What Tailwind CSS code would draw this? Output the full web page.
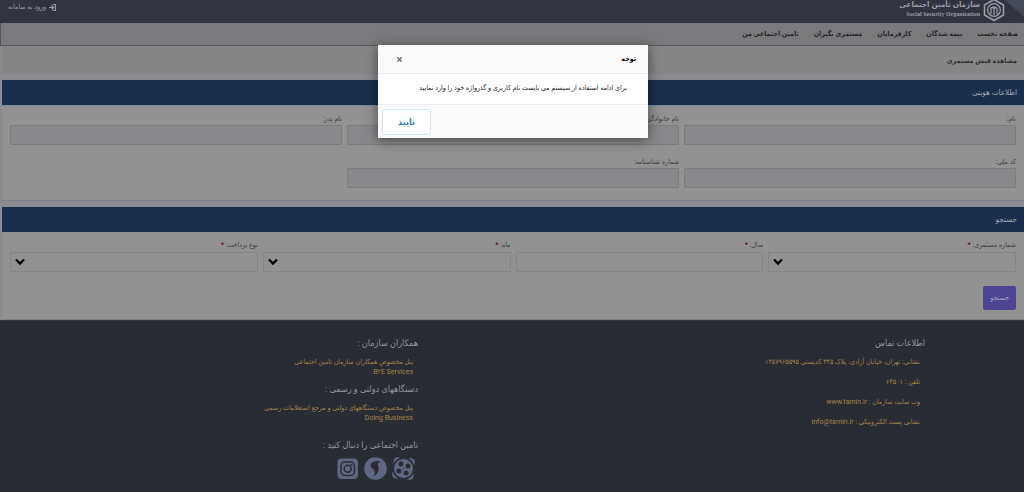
<!DOCTYPE html>
<html lang="fa" dir="rtl">
<head>
<meta charset="utf-8">
<meta name="viewport" content="width=device-width, initial-scale=1">
<title>مشاهده فیش مستمری</title>
<script src="https://cdn.jsdelivr.net/npm/@tailwindcss/browser@4"></script>
</head>
<body class="min-h-screen flex flex-col bg-[#8b8b92] font-['Roboto','DejaVu_Sans_Condensed','DejaVu_Sans',sans-serif] text-[7px] leading-[10px] text-[#3f3f42]">
<header class="h-[23px] shrink-0 overflow-hidden bg-[#31343f] flex justify-between items-start pl-2">
  <a href="#" class="flex items-start gap-[3px] text-[#9a9ca1]" aria-label="سازمان تأمین اجتماعی">
    <svg class="w-[19px] h-[23px]" viewBox="0 0 19 23" aria-hidden="true"><path d="M0 0h19v17Z" fill="#454955"/></svg>
    <svg class="w-[22px] h-[24px] -mt-[2px] -mr-[3px]" viewBox="0 0 22 24" fill="none" stroke="currentColor" stroke-width="1.600"><path d="M11 1.500 20.500 7v10L11 22.500 1.500 17V7Z"/><circle cx="11" cy="12" r="6.300" stroke-width="1.300"/><path d="M8 16v-5M11 17V8M14 16v-5M8 11a1.500 1.500 0 0 1 3 0a1.500 1.500 0 0 1 3 0" stroke-width="1.300"/></svg>
    <span class="flex flex-col items-start">
      <span class="text-[8px] leading-[10px] font-bold">سازمان تأمین اجتماعی</span>
      <span dir="ltr" class="font-['Liberation_Serif',serif] font-bold text-[6px] leading-[8px]">Social Security Organization</span>
    </span>
  </a>
  <a href="#" class="flex items-center gap-[3px] pt-[2px] text-[#9a9ca1]">
    <svg class="size-[7px]" viewBox="0 0 14 14" fill="none" stroke="currentColor" stroke-width="2.400"><path d="M8 1h5v12H8M0 7h9M5 2.500 9.500 7 5 11.500"/></svg>
    <span>ورود به سامانه</span>
  </a>
</header>
<nav class="h-[23px] shrink-0 bg-[#7a7a7c] border-b border-l border-[#56575c] flex items-center gap-[15px] px-[6px] font-bold text-[#28282c]">
  <a href="#">صفحه نخست</a><a href="#">بیمه شدگان</a><a href="#">کارفرمایان</a><a href="#">مستمری بگیران</a><a href="#">تامین اجتماعی من</a>
</nav>
<h1 class="h-7 shrink-0 ml-[2px] bg-[#868686] flex items-center px-[7px] pt-[2px] font-bold text-[#303033]">مشاهده فیش مستمری</h1>

<main class="flex flex-col gap-[6px] pt-[6px] ml-[2px]">
  <section class="bg-[#929292] border-b border-[#838387]">
    <h2 class="h-[25px] bg-[#192f4d] flex items-center px-[7px] text-[8px] text-[#a3aab3]">اطلاعات هویتی</h2>
    <div class="grid grid-cols-3 gap-x-[5px] gap-y-3 px-2 pt-2 pb-3 border-t border-[#7e8d9b]">
      <label class="flex flex-col gap-px"><span>نام:</span><input disabled class="h-5 w-full bg-[#89898b] border border-[#7d7d81] rounded-[1px]"></label>
      <label class="flex flex-col gap-px"><span>نام خانوادگی:</span><input disabled class="h-5 w-full bg-[#89898b] border border-[#7d7d81] rounded-[1px]"></label>
      <label class="flex flex-col gap-px"><span>نام پدر:</span><input disabled class="h-5 w-full bg-[#89898b] border border-[#7d7d81] rounded-[1px]"></label>
      <label class="flex flex-col gap-px"><span>کد ملی:</span><input disabled class="h-5 w-full bg-[#89898b] border border-[#7d7d81] rounded-[1px]"></label>
      <label class="flex flex-col gap-px"><span>شماره شناسنامه:</span><input disabled class="h-5 w-full bg-[#89898b] border border-[#7d7d81] rounded-[1px]"></label>
    </div>
  </section>
  <section class="bg-[#929292] border-b border-[#838387]">
    <h2 class="h-[25px] bg-[#192f4d] flex items-center px-[7px] text-[8px] text-[#a3aab3]">جستجو</h2>
    <form class="px-2 pt-2 pb-[9px]">
      <div class="grid grid-cols-4 gap-x-[5px]">
        <label class="flex flex-col gap-[2px]"><span>شماره مستمری: <b class="text-[#5c1515]">*</b></span>
          <span class="relative block"><select class="appearance-none block h-5 w-full bg-[#929292] border border-[#85858a] rounded-[1px]"></select><svg class="absolute left-[5px] top-[6px] w-[10px] h-2 pointer-events-none" viewBox="0 0 10 8" fill="none" stroke="#08080a" stroke-width="2.400"><path d="m1 1.500 4 4 4-4"/></svg></span></label>
        <label class="flex flex-col gap-[2px]"><span>سال: <b class="text-[#5c1515]">*</b></span><input class="h-5 w-full bg-[#929292] border border-[#85858a] rounded-[1px]"></label>
        <label class="flex flex-col gap-[2px]"><span>ماه: <b class="text-[#5c1515]">*</b></span>
          <span class="relative block"><select class="appearance-none block h-5 w-full bg-[#929292] border border-[#85858a] rounded-[1px]"></select><svg class="absolute left-[5px] top-[6px] w-[10px] h-2 pointer-events-none" viewBox="0 0 10 8" fill="none" stroke="#08080a" stroke-width="2.400"><path d="m1 1.500 4 4 4-4"/></svg></span></label>
        <label class="flex flex-col gap-[2px]"><span>نوع پرداخت: <b class="text-[#5c1515]">*</b></span>
          <span class="relative block"><select class="appearance-none block h-5 w-full bg-[#929292] border border-[#85858a] rounded-[1px]"></select><svg class="absolute left-[5px] top-[6px] w-[10px] h-2 pointer-events-none" viewBox="0 0 10 8" fill="none" stroke="#08080a" stroke-width="2.400"><path d="m1 1.500 4 4 4-4"/></svg></span></label>
      </div>
      <button type="button" class="mt-[14px] h-6 px-[7px] rounded-[2px] bg-[#4d4593] text-[#aaa6cb] block">جستجو</button>
    </form>
  </section>
</main>

<footer class="grow bg-[#2a2c34] border-t border-[#343640] grid grid-cols-[507fr_517fr] text-[#a0834b]">
  <section class="pt-4 pr-[99px]">
    <h3 class="text-[9px] leading-3 text-[#92949a]">اطلاعات تماس</h3>
    <ul class="mt-2 pr-[5px] flex flex-col gap-[10px]">
      <li>نشانی: تهران، خیابان آزادی، پلاک ۳۴۵ کدپستی ۱۴۵۷۹۶۵۵۹۵</li>
      <li>تلفن : ۶۴۵۰۱</li>
      <li>وب سایت سازمان : <a href="#" dir="ltr">www.tamin.ir</a></li>
      <li>نشانی پست الکترونیکی : <a href="#" dir="ltr">info@tamin.ir</a></li>
    </ul>
  </section>
  <section class="pt-4 pr-[99px]">
    <h3 class="text-[9px] leading-3 text-[#92949a]">همکاران سازمان :</h3>
    <div class="mt-2 pr-[5px] flex flex-col items-start"><a href="#">پنل مخصوص همکاران سازمان تامین اجتماعی</a><a href="#" dir="ltr">B۲E Services</a></div>
    <h3 class="mt-[6px] text-[9px] leading-3 text-[#92949a]">دستگاههای دولتی و رسمی :</h3>
    <div class="mt-2 pr-[5px] flex flex-col items-start"><a href="#">پنل مخصوص دستگاههای دولتی و مرجع استعلامات رسمی</a><a href="#">Doing Business</a></div>
    <h3 class="mt-4 text-[9px] leading-3 text-[#92949a]">تامین اجتماعی را دنبال کنید :</h3>
    <div class="mt-[6px] mr-[3px] flex gap-[5px] text-[#606783]">
      <a href="#" aria-label="آپارات"><svg class="size-[23px]" viewBox="0 0 23 23"><g fill="currentColor"><path d="M8.500.8 5.500.2Q2.500 0 1.700 3L.9 7Q3.500 2.500 8.500.8ZM22.200 8.500l.7-3q.3-3-2.900-3.900L16 .8q4.500 2.700 6.200 7.700ZM14.500 22.200l3 .6q3 .2 3.800-2.800l.8-4q-2.600 4.500-7.600 6.200ZM.8 14.500l-.7 3q-.2 3 2.900 3.800l4 .9Q2.500 19.500.8 14.500Z"/><circle cx="11.500" cy="11.500" r="9.500"/></g><g fill="#2a2c34"><circle cx="8.900" cy="7" r="2.500"/><circle cx="16" cy="8.900" r="2.500"/><circle cx="14.100" cy="16" r="2.500"/><circle cx="7" cy="14.100" r="2.500"/><circle cx="11.500" cy="11.500" r=".8"/></g></svg></a>
      <a href="#" aria-label="سروش"><svg class="size-[23px]" viewBox="0 0 23 23"><circle cx="11.500" cy="11.500" r="11.300" fill="currentColor"/><path fill="#2a2c34" d="M16.500 4C12.500 3.800 6.500 4.200 6.500 8.500c0 2.500 3 3.300 3.800 5 .8 1.700.2 3.500-.5 5.500 3.800-1.500 5.200-5 4.700-8.500-.2-1.500-.9-2.300-.4-3.800.4-1.200 1.400-1.900 2.400-2.700Z"/></svg></a>
      <a href="#" aria-label="اینستاگرام"><svg class="size-[23px]" viewBox="0 0 23 23"><rect x="1.500" y="1.500" width="20.500" height="20.500" rx="4" fill="currentColor"/><g fill="none" stroke="#2a2c34" stroke-width="1.500"><rect x="5" y="5" width="13.500" height="13.500" rx="4"/><circle cx="11.700" cy="11.700" r="3.500"/></g><circle cx="15.600" cy="7.900" r=".9" fill="#2a2c34"/></svg></a>
    </div>
  </section>
</footer>

<!-- Login notice -->
<div class="absolute inset-x-0 top-[45px] flex justify-center pl-[2px]">
  <div role="dialog" aria-labelledby="notice-title" class="w-[270px] bg-white shadow-[0_2px_12px_rgba(0,0,0,0.5)] text-[#1c1c1c]">
    <div class="h-[29px] bg-[#fafafa] border-b border-[#ececec] flex items-center justify-between pr-3 pl-[18px]">
      <h2 id="notice-title" class="font-bold text-black">توجه</h2>
      <button type="button" aria-label="بستن" class="p-px"><svg class="size-[5px]" viewBox="0 0 5 5" stroke="#555" stroke-width="1.200"><path d="m.4.4 4.200 4.200M4.600.4.400 4.600"/></svg></button>
    </div>
    <p class="h-[30px] flex items-center pr-[21px] pb-[2px] whitespace-nowrap">برای ادامه استفاده از سیستم می بایست نام کاربری و گذرواژه خود را وارد نمایید</p>
    <div class="h-[34px] bg-[#fafafa] border-t border-[#ececec] flex justify-end items-center pl-1">
      <button type="button" class="h-[26px] w-[49px] rounded-[3px] bg-white border border-[#cfe4ee] text-[#2c83a6] text-[9px] font-bold">تایید</button>
    </div>
  </div>
</div>
</body>
</html>
